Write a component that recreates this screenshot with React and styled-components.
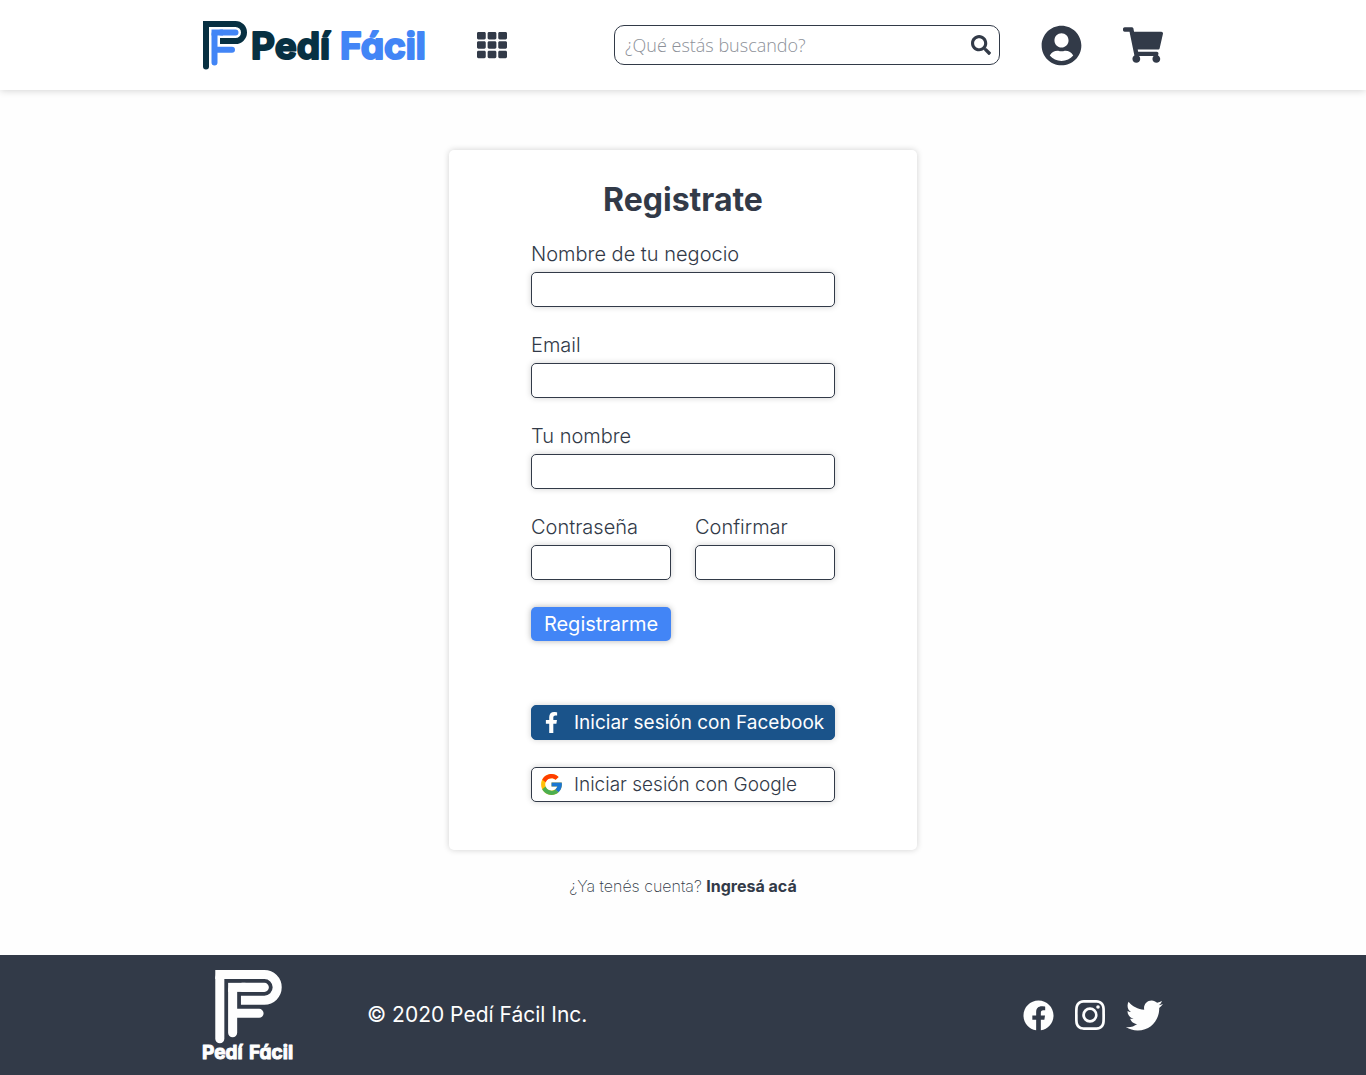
import React from "react";
import styled, { createGlobalStyle } from "styled-components";
import {
  FaTh,
  FaSearch,
  FaUserCircle,
  FaShoppingCart,
  FaFacebookF,
  FaFacebook,
  FaTwitter,
} from "react-icons/fa";
import { BsInstagram } from "react-icons/bs";
import { FcGoogle } from "react-icons/fc";

const ink = "#323a48";
const blue = "#4285f6";
const paper = "#fefefe";
const navy = "#073042";

const GlobalStyle = createGlobalStyle`
  *, *::before, *::after { box-sizing: border-box; }
  body {
    margin: 0;
    background: ${paper};
    color: ${ink};
    font-family: Inter, "Liberation Sans", sans-serif;
  }
  a { color: inherit; text-decoration: none; }
  button, input { font: inherit; }
  svg { display: block; }
`;

const Page = styled.div`
  display: flex;
  flex-direction: column;
  min-height: 100vh;
`;

const Container = styled.div`
  display: flex;
  align-items: center;
  width: 100%;
  max-width: 960px;
  margin: 0 auto;
`;

const Header = styled.header`
  display: flex;
  height: 90px;
  background: #fff;
  box-shadow: 0 0 8px rgba(0, 0, 0, 0.2);
`;

const Brand = styled.a`
  display: flex;
  align-items: center;
  gap: 4px;
  width: 223px;
`;

const Wordmark = styled.svg`
  overflow: visible;
  font-family: Inter, "Liberation Sans", sans-serif;
  font-size: ${(p) => p.$size}px;
  font-weight: 700;
  font-optical-sizing: none;
  font-feature-settings: "cv11";
  stroke-width: ${(p) => p.$stroke}px;
  stroke-linejoin: round;
`;

const IconButton = styled.button`
  display: flex;
  padding: 0;
  border: 0;
  background: none;
  color: ${ink};
  cursor: pointer;
`;

const MenuButton = styled(IconButton)`
  margin-left: 51px;
`;

const Actions = styled.div`
  display: flex;
  align-items: center;
  gap: 41px;
  margin-left: auto;
`;

const SearchBox = styled.form`
  display: flex;
  align-items: center;
  width: 386px;
  height: 40px;
  padding: 0 8px 0 10px;
  border: 1px solid ${ink};
  border-radius: 10px;
  background: #fff;
`;

const SearchInput = styled.input`
  flex: 1;
  min-width: 0;
  padding: 0;
  border: 0;
  outline: 0;
  background: none;
  color: ${ink};
  font-family: "Open Sans", "Noto Sans", sans-serif;
  font-size: 18px;
  font-weight: 300;

  &::placeholder {
    color: #8d9199;
    opacity: 1;
  }
`;

const Main = styled.main`
  display: flex;
  flex: 1;
  flex-direction: column;
  align-items: center;
  padding: 60px 16px 57px;
`;

const Card = styled.section`
  width: 100%;
  max-width: 468px;
  padding: 26px 82px 48px;
  border-radius: 5px;
  background: #fff;
  box-shadow: 0 0 6px rgba(0, 0, 0, 0.18);
`;

const Title = styled.h1`
  margin: 0 0 19px;
  font-size: 32px;
  line-height: 48px;
  font-weight: 700;
  text-align: center;
`;

const Form = styled.form`
  display: grid;
  grid-template-columns: 1fr 1fr;
  gap: 27px 24px;
`;

const Field = styled.div`
  display: flex;
  flex-direction: column;
  gap: 7px;
  min-width: 0;
  grid-column: ${(p) => (p.$half ? "auto" : "1 / -1")};
`;

const Label = styled.label`
  font-size: 20px;
  line-height: 22px;
  font-weight: 300;
`;

const Input = styled.input`
  width: 100%;
  height: 35px;
  padding: 0 10px;
  border: 1px solid ${ink};
  border-radius: 5px;
  background: #fff;
  color: ${ink};
  box-shadow: 0 0 6px rgba(0, 0, 0, 0.18);
`;

const Submit = styled.button`
  height: 34px;
  padding: 0;
  border: 0;
  border-radius: 5px;
  background: ${blue};
  color: ${paper};
  font-size: 20px;
  font-weight: 400;
  box-shadow: 0 0 6px rgba(0, 0, 0, 0.3);
  cursor: pointer;
`;

const SocialLogins = styled.div`
  display: flex;
  flex-direction: column;
  gap: 27px;
  margin-top: 64px;
`;

const SocialButton = styled.button`
  display: grid;
  grid-template-columns: 38px 1fr;
  align-items: center;
  gap: 4px;
  height: 35px;
  padding: 0;
  border: 1px solid ${(p) => (p.$filled ? "#1a538a" : ink)};
  border-radius: 5px;
  background: ${(p) => (p.$filled ? "#1a538a" : "#fff")};
  color: ${(p) => (p.$filled ? paper : ink)};
  font-size: 19px;
  line-height: 33px;
  font-weight: ${(p) => (p.$filled ? 400 : 300)};
  text-align: left;
  white-space: nowrap;
  box-shadow: 0 0 6px rgba(0, 0, 0, 0.18);
  cursor: pointer;

  svg { justify-self: center; }
`;

const SignIn = styled.p`
  margin: 24px 0 0;
  font-size: 16px;
  line-height: 24px;
  font-weight: 200;

  a { font-weight: 700; }
`;

const Footer = styled.footer`
  display: flex;
  height: 120px;
  background: ${ink};
  color: ${paper};
`;

const FooterBrand = styled.a`
  display: flex;
  flex-direction: column;
  align-items: center;
  width: 90px;
`;

const Copyright = styled.p`
  margin: 0 0 0 74px;
  font-size: 21px;
  line-height: 26px;
`;

const SocialLinks = styled.nav`
  display: flex;
  align-items: center;
  gap: 21px;
  margin-left: auto;
`;

function Mark({ outer, inner, width, height }) {
  return (
    <svg width={width} height={height} viewBox="0 0 44 49" fill="none" strokeWidth="6" aria-hidden="true">
      <path d="M0 3H32.500a8.500 8.500 0 0 1 0 17H17" stroke={outer} />
      <path d="M3 5V45.500" stroke={outer} strokeLinecap="round" />
      <path d="M8.500 11.500H20" stroke={inner} />
      <path d="M18 11.500H32.500M11.500 13V41.500M13 28.700H29" stroke={inner} strokeLinecap="round" />
    </svg>
  );
}

const fields = [
  { id: "business", label: "Nombre de tu negocio", type: "text" },
  { id: "email", label: "Email", type: "email" },
  { id: "name", label: "Tu nombre", type: "text" },
  { id: "password", label: "Contraseña", type: "password", half: true },
  { id: "confirm", label: "Confirmar", type: "password", half: true },
];

export default function App() {
  return (
    <Page>
      <GlobalStyle />
      <Header>
        <Container>
          <Brand href="#">
            <Mark outer={navy} inner={blue} width={44} height={49} />
            <Wordmark width={175} height={46} $size={37} $stroke={2}>
              <text x="0" y="37" fill={navy} stroke={navy}>Pedí</text>
              <text x="89" y="37" fill={blue} stroke={blue}>Fácil</text>
            </Wordmark>
          </Brand>
          <MenuButton type="button" aria-label="Categorías">
            <FaTh size={30} />
          </MenuButton>
          <Actions>
            <SearchBox>
              <SearchInput type="text" aria-label="Buscar" placeholder="¿Qué estás buscando?" />
              <IconButton type="button" aria-label="Buscar">
                <FaSearch size={20} />
              </IconButton>
            </SearchBox>
            <IconButton type="button" aria-label="Mi cuenta">
              <FaUserCircle size={41} />
            </IconButton>
            <IconButton type="button" aria-label="Carrito">
              <FaShoppingCart size={40} />
            </IconButton>
          </Actions>
        </Container>
      </Header>

      <Main>
        <Card>
          <Title>Registrate</Title>
          <Form>
            {fields.map((f) => (
              <Field key={f.id} $half={f.half}>
                <Label htmlFor={f.id}>{f.label}</Label>
                <Input id={f.id} type={f.type} />
              </Field>
            ))}
            <Submit type="button">Registrarme</Submit>
          </Form>
          <SocialLogins>
            <SocialButton type="button" $filled>
              <FaFacebookF size={21} />
              <span>Iniciar sesión con Facebook</span>
            </SocialButton>
            <SocialButton type="button">
              <FcGoogle size={25} />
              <span>Iniciar sesión con Google</span>
            </SocialButton>
          </SocialLogins>
        </Card>
        <SignIn>
          ¿Ya tenés cuenta? <a href="#">Ingresá acá</a>
        </SignIn>
      </Main>

      <Footer>
        <Container>
          <FooterBrand href="#">
            <Mark outer={paper} inner={paper} width={67} height={74} />
            <Wordmark width={90} height={16} $size={19} $stroke={1}>
              <text x="-1" y="15" fill={paper} stroke={paper}>Pedí</text>
              <text x="46" y="15" fill={paper} stroke={paper}>Fácil</text>
            </Wordmark>
          </FooterBrand>
          <Copyright>© 2020 Pedí Fácil Inc.</Copyright>
          <SocialLinks aria-label="Redes sociales">
            <a href="#" aria-label="Facebook"><FaFacebook size={31} /></a>
            <a href="#" aria-label="Instagram"><BsInstagram size={30} /></a>
            <a href="#" aria-label="Twitter"><FaTwitter size={37} /></a>
          </SocialLinks>
        </Container>
      </Footer>
    </Page>
  );
}
